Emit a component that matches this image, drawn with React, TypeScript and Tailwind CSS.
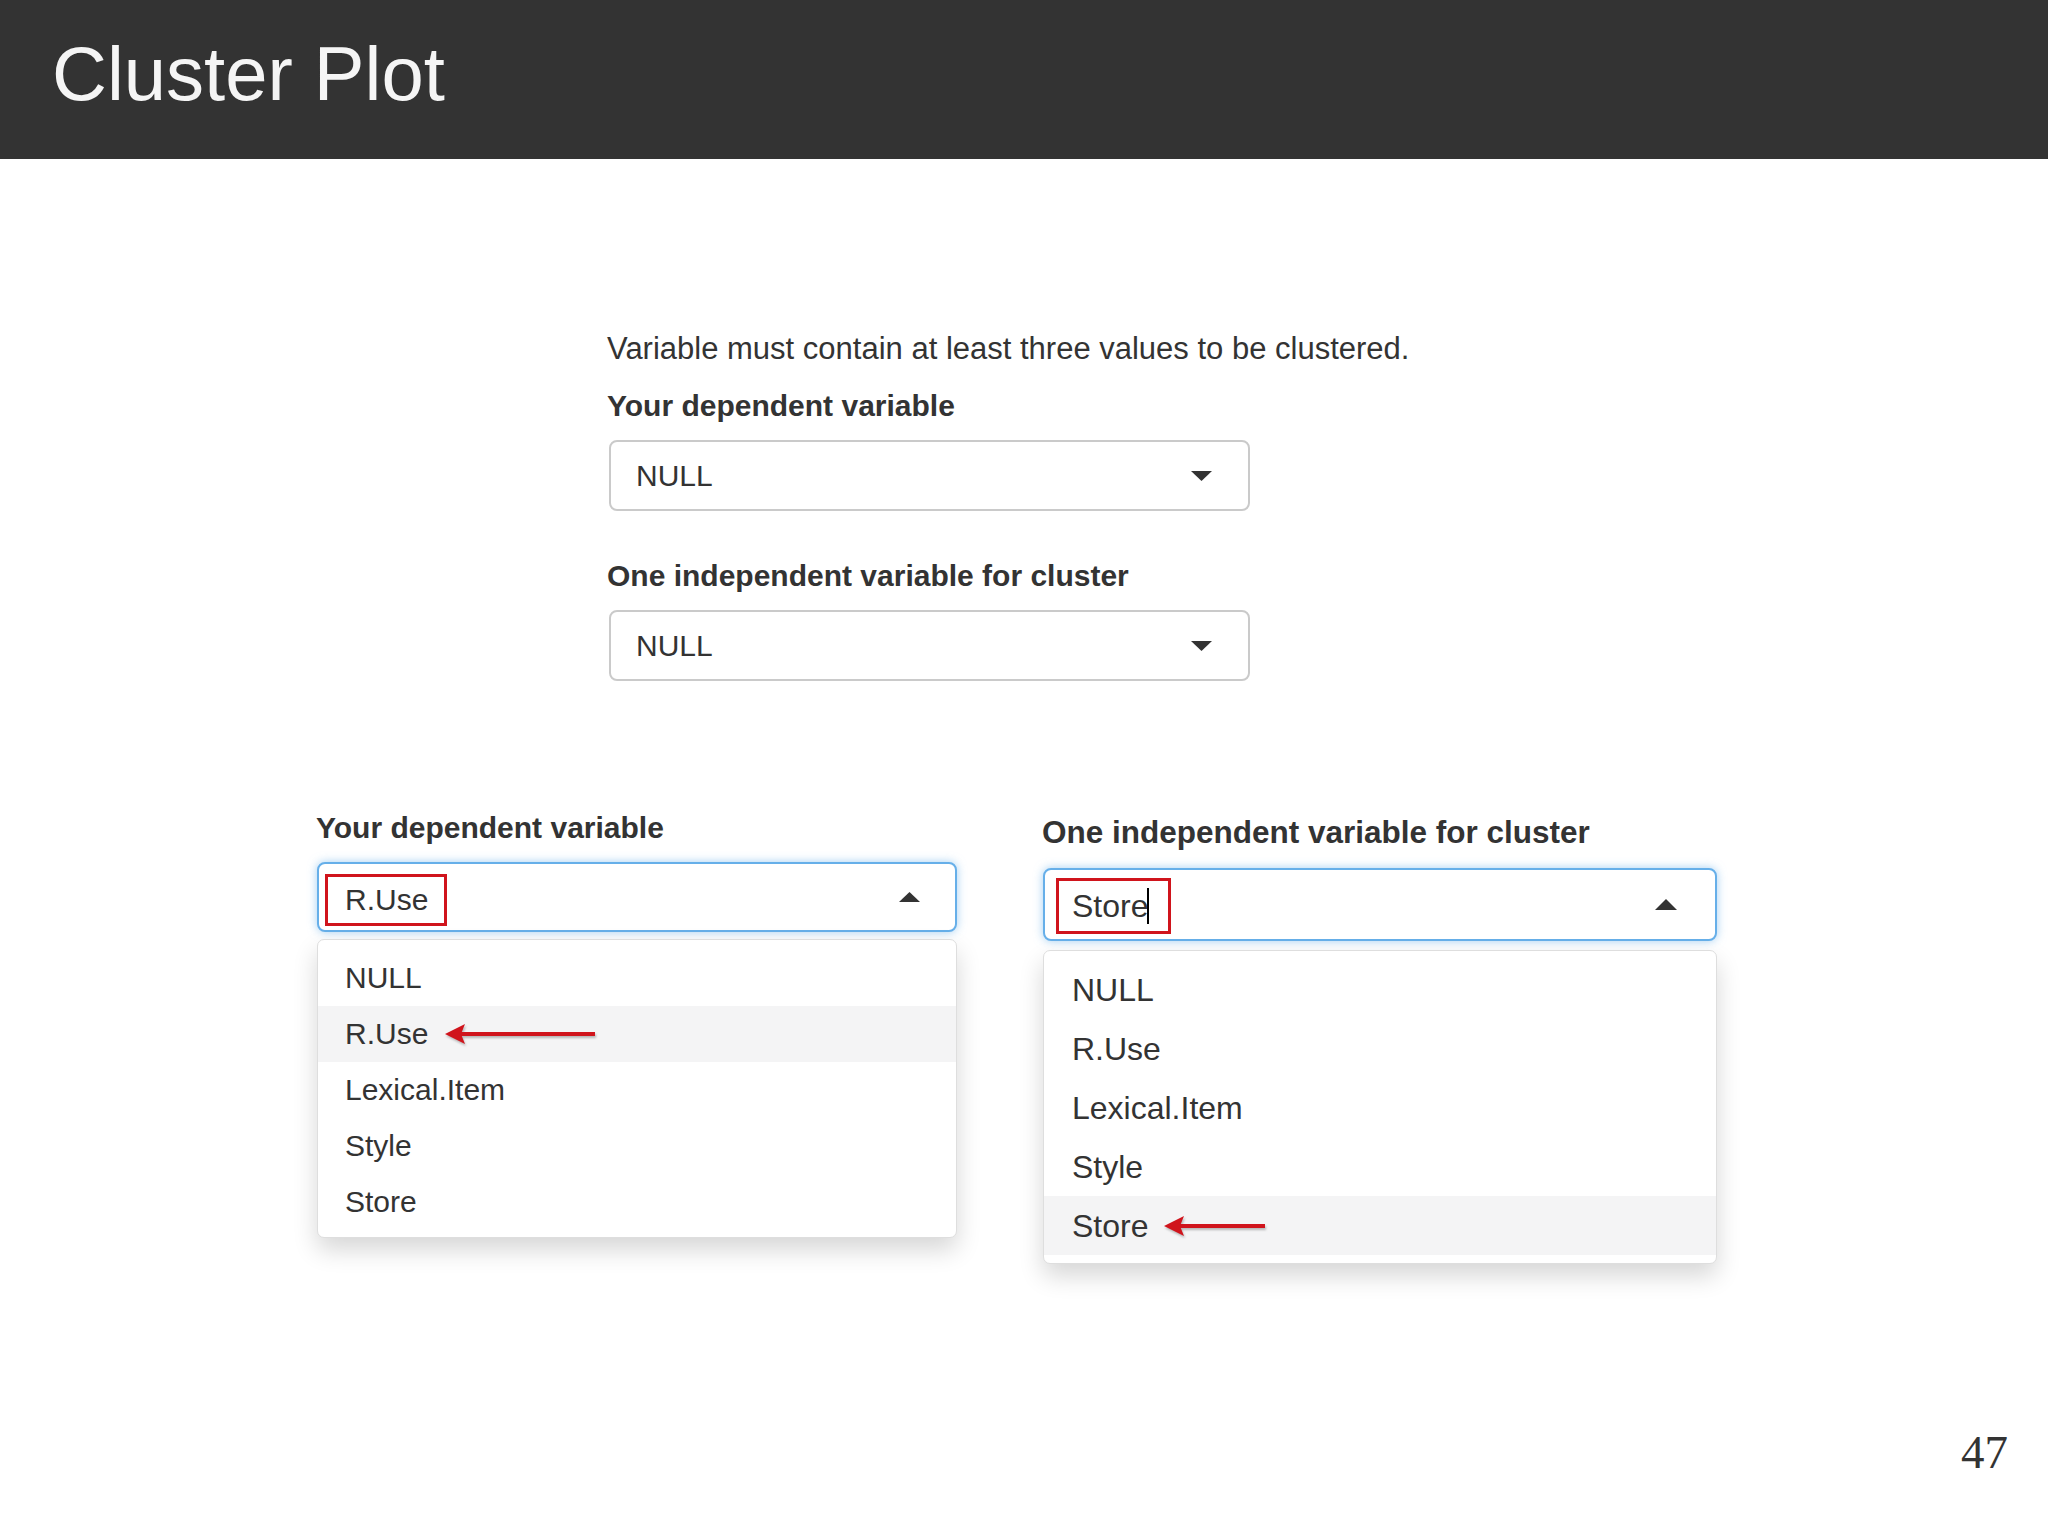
import React from "react";

const items = ["NULL", "R.Use", "Lexical.Item", "Style", "Store"];

function CaretDown() {
  return (
    <svg width="21" height="10" viewBox="0 0 21 10" className="shrink-0">
      <polygon points="0,0 21,0 10.5,10" fill="#333333" />
    </svg>
  );
}

function CaretUp({ w = 21, h = 10 }: { w?: number; h?: number }) {
  return (
    <svg width={w} height={h} viewBox={`0 0 ${w} ${h}`} className="shrink-0">
      <polygon points={`0,${h} ${w},${h} ${w / 2},0`} fill="#333333" />
    </svg>
  );
}

function Arrow({ width }: { width: number }) {
  return (
    <svg
      width={width}
      height="24"
      viewBox={`0 0 ${width} 24`}
      className="shrink-0 drop-shadow-[1px_2px_1px_rgba(0,0,0,0.25)]"
    >
      <rect x="14" y="10" width={width - 14} height="4" fill="#d0141c" />
      <polygon points="0,12 20,2 16,12 20,22" fill="#d0141c" />
    </svg>
  );
}

function UpperSelect() {
  return (
    <div className="mt-[16px] ml-[2px] flex h-[71px] w-[641px] items-center justify-between rounded-[8px] border-2 border-[#cacaca] bg-white pl-[25px] pr-[36px]">
      <span className="text-[30px] leading-none text-[#333333]">NULL</span>
      <CaretDown />
    </div>
  );
}

export default function App() {
  return (
    <div className="flex h-[1536px] w-[2048px] flex-col bg-white font-['Liberation_Sans',Arial,sans-serif] text-[#333333]">
      {/* Header */}
      <div className="h-[159px] shrink-0 bg-[#333333] pl-[52px] pt-[36px]">
        <h1 className="text-[76px] leading-none font-normal text-[#f5f5f5]">Cluster Plot</h1>
      </div>

      {/* Upper form */}
      <div className="ml-[607px] mt-[172px] w-[643px]">
        <p className="whitespace-nowrap text-[31px] leading-[36px]">
          Variable must contain at least three values to be clustered.
        </p>
        <div className="mt-[21px] whitespace-nowrap text-[30px] font-bold leading-[36px]">
          Your dependent variable
        </div>
        <UpperSelect />
        <div className="mt-[47px] whitespace-nowrap text-[30px] font-bold leading-[36px]">
          One independent variable for cluster
        </div>
        <UpperSelect />
      </div>

      {/* Lower screenshots */}
      <div className="mt-[129px] flex items-start pl-[316px]">
        {/* Left */}
        <div className="w-[641px]">
          <div className="whitespace-nowrap text-[30px] font-bold leading-[36px]">Your dependent variable</div>
          <div className="mt-[16px] ml-[1px] flex h-[70px] items-start justify-between rounded-[8px] border-2 border-[#66afe9] bg-white pl-[6px] pr-[35px] pt-[10px] shadow-[0_0_10px_rgba(102,175,233,0.6)]">
            <div className="flex h-[52px] w-[122px] items-center border-[3px] border-[#d0141c] pl-[17px]">
              <span className="text-[30px] leading-none">R.Use</span>
            </div>
            <div className="self-center -mt-[10px]">
              <CaretUp />
            </div>
          </div>
          <div className="mt-[7px] ml-[1px] rounded-[7px] border border-[#dedede] bg-white pb-[7px] pt-[10px] shadow-[0_12px_24px_rgba(0,0,0,0.16)]">
            {items.map((it) => (
              <div
                key={it}
                className={`flex h-[56px] items-center pl-[27px] ${it === "R.Use" ? "bg-[#f4f4f5]" : ""}`}
              >
                <span className="text-[30px] leading-none">{it}</span>
                {it === "R.Use" && (
                  <span className="ml-[17px] flex items-center">
                    <Arrow width={150} />
                  </span>
                )}
              </div>
            ))}
          </div>
        </div>

        {/* Right */}
        <div className="ml-[85px] w-[675px] pt-[4px]">
          <div className="whitespace-nowrap text-[31.5px] font-bold leading-[36px]">
            One independent variable for cluster
          </div>
          <div className="mt-[18px] ml-[1px] flex h-[73px] items-start justify-between rounded-[8px] border-2 border-[#66afe9] bg-white pl-[11px] pr-[38px] pt-[8px] shadow-[0_0_10px_rgba(102,175,233,0.6)]">
            <div className="flex h-[56px] w-[115px] items-center border-[3px] border-[#d0141c] pl-[13px]">
              <span className="text-[32px] leading-none">Store</span>
              <span className="ml-[-1px] h-[36px] w-[2px] bg-black" />
            </div>
            <div className="self-center -mt-[8px]">
              <CaretUp w={22} h={11} />
            </div>
          </div>
          <div className="mt-[9px] ml-[1px] rounded-[7px] border border-[#dedede] bg-white pb-[8px] pt-[9px] shadow-[0_12px_24px_rgba(0,0,0,0.16)]">
            {items.map((it) => (
              <div
                key={it}
                className={`flex h-[59px] items-center pl-[28px] ${it === "Store" ? "bg-[#f4f4f5]" : ""}`}
              >
                <span className="text-[32px] leading-none">{it}</span>
                {it === "Store" && (
                  <span className="ml-[16px] flex items-center">
                    <Arrow width={101} />
                  </span>
                )}
              </div>
            ))}
          </div>
        </div>
      </div>

      {/* Page number */}
      <div className="mt-auto flex justify-end pb-[60px] pr-[40px]">
        <span className="font-['Liberation_Serif',serif] text-[47px] leading-none text-[#333333]">47</span>
      </div>
    </div>
  );
}
